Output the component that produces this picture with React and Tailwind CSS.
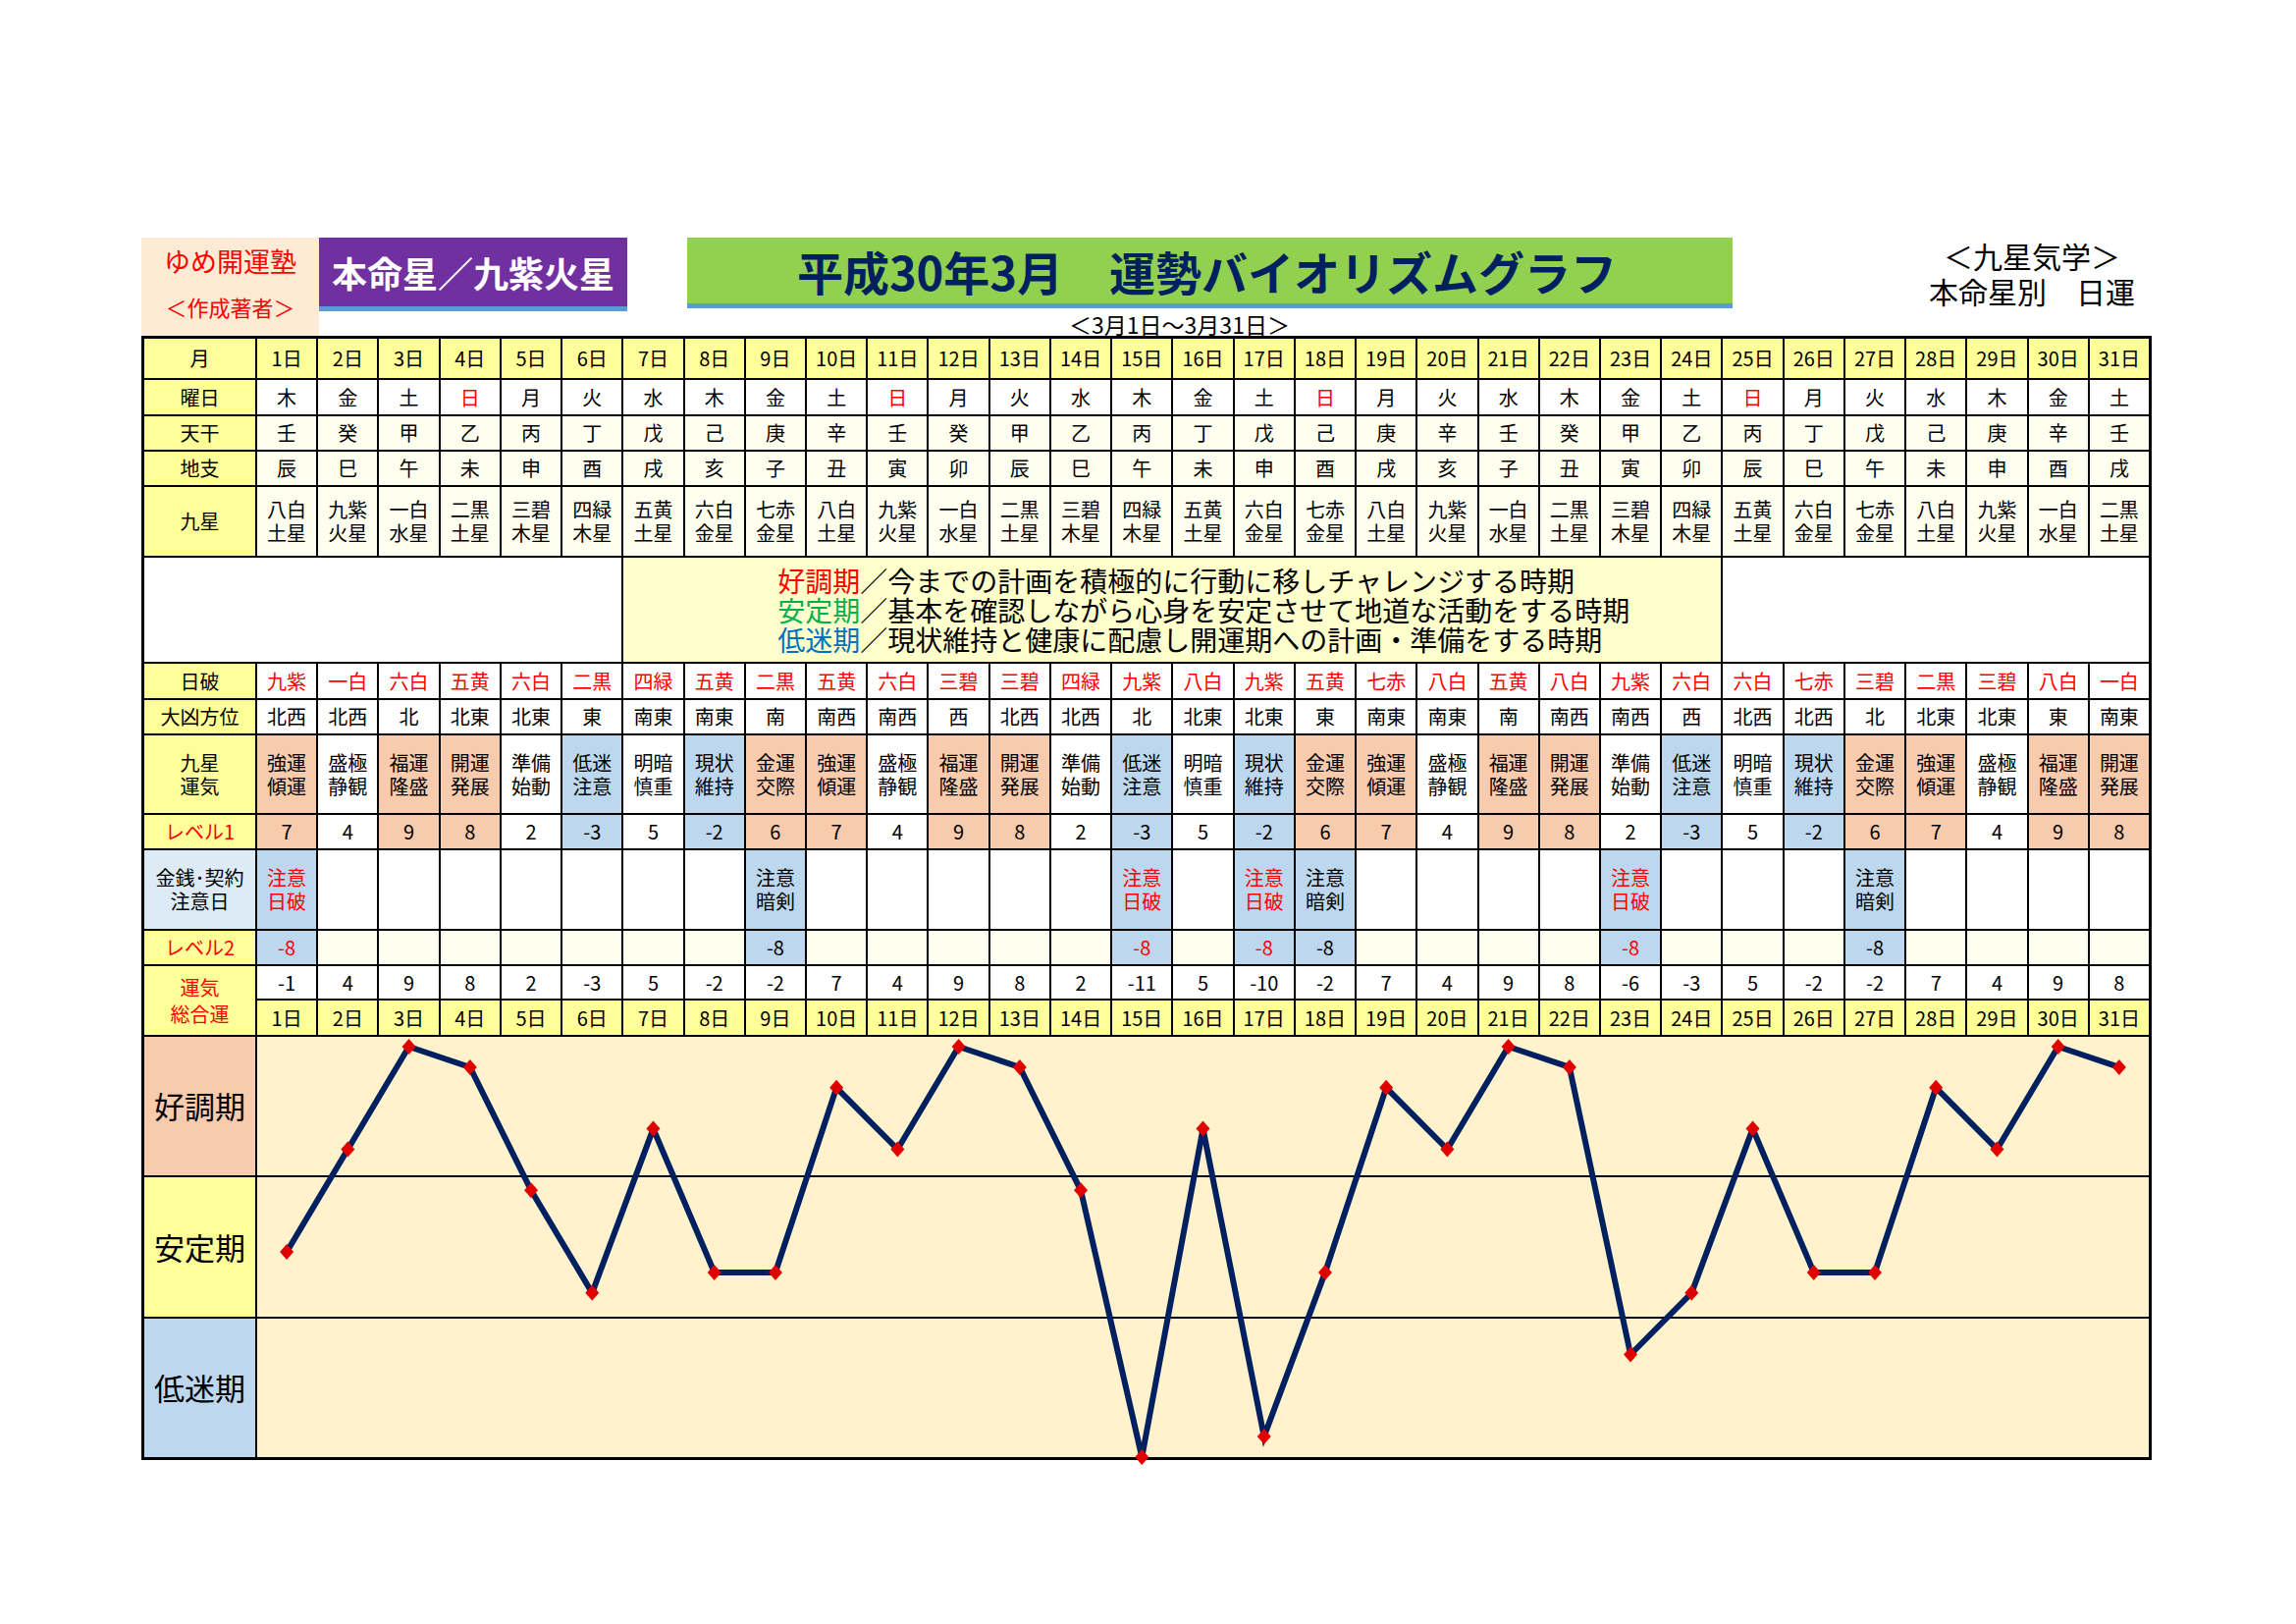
import React from 'react';

const STAR_PLANET = {
  '一白': '水星', '二黒': '土星', '三碧': '木星', '四緑': '木星', '五黄': '土星',
  '六白': '金星', '七赤': '金星', '八白': '土星', '九紫': '火星',
};
const STAR_ORDER = ['一白', '二黒', '三碧', '四緑', '五黄', '六白', '七赤', '八白', '九紫'];
const WEEK = ['木', '金', '土', '日', '月', '火', '水'];
const KAN = ['壬', '癸', '甲', '乙', '丙', '丁', '戊', '己', '庚', '辛'];
const SHI = ['辰', '巳', '午', '未', '申', '酉', '戌', '亥', '子', '丑', '寅', '卯'];

const NIPPA = '九紫 一白 六白 五黄 六白 二黒 四緑 五黄 二黒 五黄 六白 三碧 三碧 四緑 九紫 八白 九紫 五黄 七赤 八白 五黄 八白 九紫 六白 六白 七赤 三碧 二黒 三碧 八白 一白'.split(' ');
const DIRS = '北西 北西 北 北東 北東 東 南東 南東 南 南西 南西 西 北西 北西 北 北東 北東 東 南東 南東 南 南西 南西 西 北西 北西 北 北東 北東 東 南東'.split(' ');
const LEVEL1 = [7, 4, 9, 8, 2, -3, 5, -2, 6, 7, 4, 9, 8, 2, -3, 5, -2, 6, 7, 4, 9, 8, 2, -3, 5, -2, 6, 7, 4, 9, 8];
const LUCK = {
  7: ['強運', '傾運'], 4: ['盛極', '静観'], 9: ['福運', '隆盛'], 8: ['開運', '発展'], 2: ['準備', '始動'],
  '-3': ['低迷', '注意'], 5: ['明暗', '慎重'], '-2': ['現状', '維持'], 6: ['金運', '交際'],
};
// 金銭・契約 注意日: 'n' = 日破 (赤), 'a' = 暗剣
const CAUTION = { 1: 'n', 9: 'a', 15: 'n', 17: 'n', 18: 'a', 23: 'n', 27: 'a' };

const days = Array.from({ length: 31 }, (_, i) => {
  const d = i + 1;
  const star = STAR_ORDER[(7 + i) % 9];
  const l1 = LEVEL1[i];
  const l2 = CAUTION[d] ? -8 : 0;
  return {
    d,
    week: WEEK[i % 7],
    kan: KAN[i % 10],
    shi: SHI[i % 12],
    star,
    planet: STAR_PLANET[star],
    nippa: NIPPA[i],
    dir: DIRS[i],
    l1,
    l2,
    caution: CAUTION[d],
    total: l1 + l2,
  };
});

const fmt = (n) => (n < 0 ? `-${Math.abs(n)}` : `${n}`);

const levelBg = (v) => (v >= 6 ? 'bg-[#f8cbad]' : v < 0 ? 'bg-[#bdd7ee]' : 'bg-white');

// single line cell / two line cell
const cell = 'flex items-center justify-center text-center text-[20px] leading-none';
const cell2 = 'flex flex-col items-center justify-center text-center text-[20px] leading-[24px]';
const label = `${cell} bg-[#ffff99]`;

// graph geometry
const GW = 1927;
const GH = 428;
const PITCH = (GW + 2) / 31;
const px = (i) => i * PITCH + (PITCH - 2) / 2;
const py = (v) => 10 + (9 - v) * 20.9;

function Graph() {
  const pts = days.map((d, i) => [px(i), py(d.total)]);
  return (
    <svg
      className="absolute inset-0 overflow-visible"
      width={GW}
      height={GH}
      viewBox={`0 0 ${GW} ${GH}`}
    >
      <polyline
        points={pts.map((p) => p.join(',')).join(' ')}
        fill="none"
        stroke="#002060"
        strokeWidth="6"
        strokeLinejoin="miter"
      />
      {pts.map(([x, y], i) => (
        <polygon
          key={i}
          points={`${x},${y - 8} ${x + 7},${y} ${x},${y + 8} ${x - 7},${y}`}
          fill="#e00000"
        />
      ))}
    </svg>
  );
}

export default function App() {
  return (
    <div className="w-[2339px] h-[1654px] bg-white text-black font-['Noto_Sans_CJK_JP','Noto_Sans',sans-serif]">
      <div className="pl-[144px] pt-[242px]">
        {/* header */}
        <div className="flex h-[100px]">
          <div className="w-[181px] h-[100px] bg-[#fdebd6] flex flex-col items-center text-[#ff0000]">
            <div className="text-[27px] leading-none mt-[10px]">ゆめ開運塾</div>
            <div className="text-[22px] leading-none mt-[22px]">＜作成著者＞</div>
          </div>
          <div className="w-[314px] h-[75px] bg-[#7030a0] border-b-[5px] border-[#5b9bd5] flex items-center pl-[13px]">
            <span className="text-white font-bold text-[36px] leading-none">本命星／九紫火星</span>
          </div>
          <div className="w-[61px]" />
          <div className="w-[1065px] flex flex-col">
            <div className="h-[75px] bg-[#92d050] border-b-[5px] border-[#5b9bd5] flex items-center justify-center pr-[6px]">
              <span className="text-[#002060] font-bold text-[47px] leading-none">平成30年3月　運勢バイオリズムグラフ</span>
            </div>
            <div className="text-[23px] leading-none text-center pr-[62px] mt-[5px]">＜3月1日～3月31日＞</div>
          </div>
          <div className="w-[300px] ml-[155px] flex flex-col items-center text-[30px] leading-[36px]">
            <div>＜九星気学＞</div>
            <div>本命星別　日運</div>
          </div>
        </div>

        {/* table */}
        <div className="w-[2048px] grid grid-cols-[113px_repeat(31,minmax(0,1fr))] grid-rows-[40px_35px_34px_34px_70px_106px_35px_34px_79px_34px_80px_34px_33px_35px_428px] gap-[2px] bg-black border-[3px] border-black">
          {/* 月 */}
          <div className={label}>月</div>
          {days.map((d) => (
            <div key={`m${d.d}`} className={`${cell} bg-[#ffff99]`}>{d.d}日</div>
          ))}

          {/* 曜日 */}
          <div className={label}>曜日</div>
          {days.map((d) => (
            <div key={`w${d.d}`} className={`${cell} bg-white ${d.week === '日' ? 'text-[#ff0000]' : ''}`}>{d.week}</div>
          ))}

          {/* 天干 */}
          <div className={label}>天干</div>
          {days.map((d) => (
            <div key={`k${d.d}`} className={`${cell} bg-[#fffff0]`}>{d.kan}</div>
          ))}

          {/* 地支 */}
          <div className={label}>地支</div>
          {days.map((d) => (
            <div key={`s${d.d}`} className={`${cell} bg-[#fffff0]`}>{d.shi}</div>
          ))}

          {/* 九星 */}
          <div className={label}>九星</div>
          {days.map((d) => (
            <div key={`q${d.d}`} className={`${cell2} bg-[#fffff0]`}>
              <span>{d.star}</span>
              <span>{d.planet}</span>
            </div>
          ))}

          {/* legend */}
          <div className="col-span-7 bg-white" />
          <div className="col-span-18 bg-[#ffffcc] flex flex-col justify-center pl-[157px] text-[28px] leading-[30px] whitespace-nowrap">
            <div><span className="text-[#ff0000]">好調期</span>／今までの計画を積極的に行動に移しチャレンジする時期</div>
            <div><span className="text-[#00b050]">安定期</span>／基本を確認しながら心身を安定させて地道な活動をする時期</div>
            <div><span className="text-[#0070c0]">低迷期</span>／現状維持と健康に配慮し開運期への計画・準備をする時期</div>
          </div>
          <div className="col-span-7 bg-white" />

          {/* 日破 */}
          <div className={label}>日破</div>
          {days.map((d) => (
            <div key={`n${d.d}`} className={`${cell} bg-white text-[#ff0000]`}>{d.nippa}</div>
          ))}

          {/* 大凶方位 */}
          <div className={label}>大凶方位</div>
          {days.map((d) => (
            <div key={`h${d.d}`} className={`${cell} bg-white`}>{d.dir}</div>
          ))}

          {/* 九星運気 */}
          <div className={`${cell2} bg-[#ffff99]`}>
            <span>九星</span>
            <span>運気</span>
          </div>
          {days.map((d) => (
            <div key={`u${d.d}`} className={`${cell2} ${levelBg(d.l1)}`}>
              <span>{LUCK[d.l1][0]}</span>
              <span>{LUCK[d.l1][1]}</span>
            </div>
          ))}

          {/* レベル1 */}
          <div className={`${label} text-[#ff0000]`}>レベル1</div>
          {days.map((d) => (
            <div key={`l1${d.d}`} className={`${cell} ${levelBg(d.l1)}`}>{fmt(d.l1)}</div>
          ))}

          {/* 金銭・契約 注意日 */}
          <div className={`${cell2} bg-[#ddebf7]`}>
            <span>金銭･契約</span>
            <span>注意日</span>
          </div>
          {days.map((d) => (
            <div
              key={`c${d.d}`}
              className={`${cell2} ${d.caution ? 'bg-[#bdd7ee]' : 'bg-white'} ${d.caution === 'n' ? 'text-[#ff0000]' : ''}`}
            >
              {d.caution && <span>注意</span>}
              {d.caution && <span>{d.caution === 'n' ? '日破' : '暗剣'}</span>}
            </div>
          ))}

          {/* レベル2 */}
          <div className={`${label} text-[#ff0000]`}>レベル2</div>
          {days.map((d) => (
            <div
              key={`l2${d.d}`}
              className={`${cell} ${d.caution ? 'bg-[#bdd7ee]' : 'bg-[#fffff0]'} ${d.caution === 'n' ? 'text-[#ff0000]' : ''}`}
            >
              {d.caution ? fmt(d.l2) : ''}
            </div>
          ))}

          {/* 運気総合運 */}
          <div className={`${cell2} row-span-2 bg-[#ffff99] text-[#ff0000] leading-[27px]`}>
            <span>運気</span>
            <span>総合運</span>
          </div>
          {days.map((d) => (
            <div key={`t${d.d}`} className={`${cell} bg-white`}>{fmt(d.total)}</div>
          ))}
          {days.map((d) => (
            <div key={`td${d.d}`} className={`${cell} bg-[#ffff99]`}>{d.d}日</div>
          ))}

          {/* graph */}
          <div className="flex flex-col gap-[2px] bg-black">
            <div className="flex-1 bg-[#f8cbad] flex items-center justify-center text-[31px]">好調期</div>
            <div className="flex-1 bg-[#ffff99] flex items-center justify-center text-[31px]">安定期</div>
            <div className="flex-1 bg-[#bdd7ee] flex items-center justify-center text-[31px]">低迷期</div>
          </div>
          <div className="col-span-31 relative flex flex-col gap-[2px] bg-black">
            <div className="flex-1 bg-[#fff2cc]" />
            <div className="flex-1 bg-[#fff2cc]" />
            <div className="flex-1 bg-[#fff2cc]" />
            <Graph />
          </div>
        </div>
      </div>
    </div>
  );
}
